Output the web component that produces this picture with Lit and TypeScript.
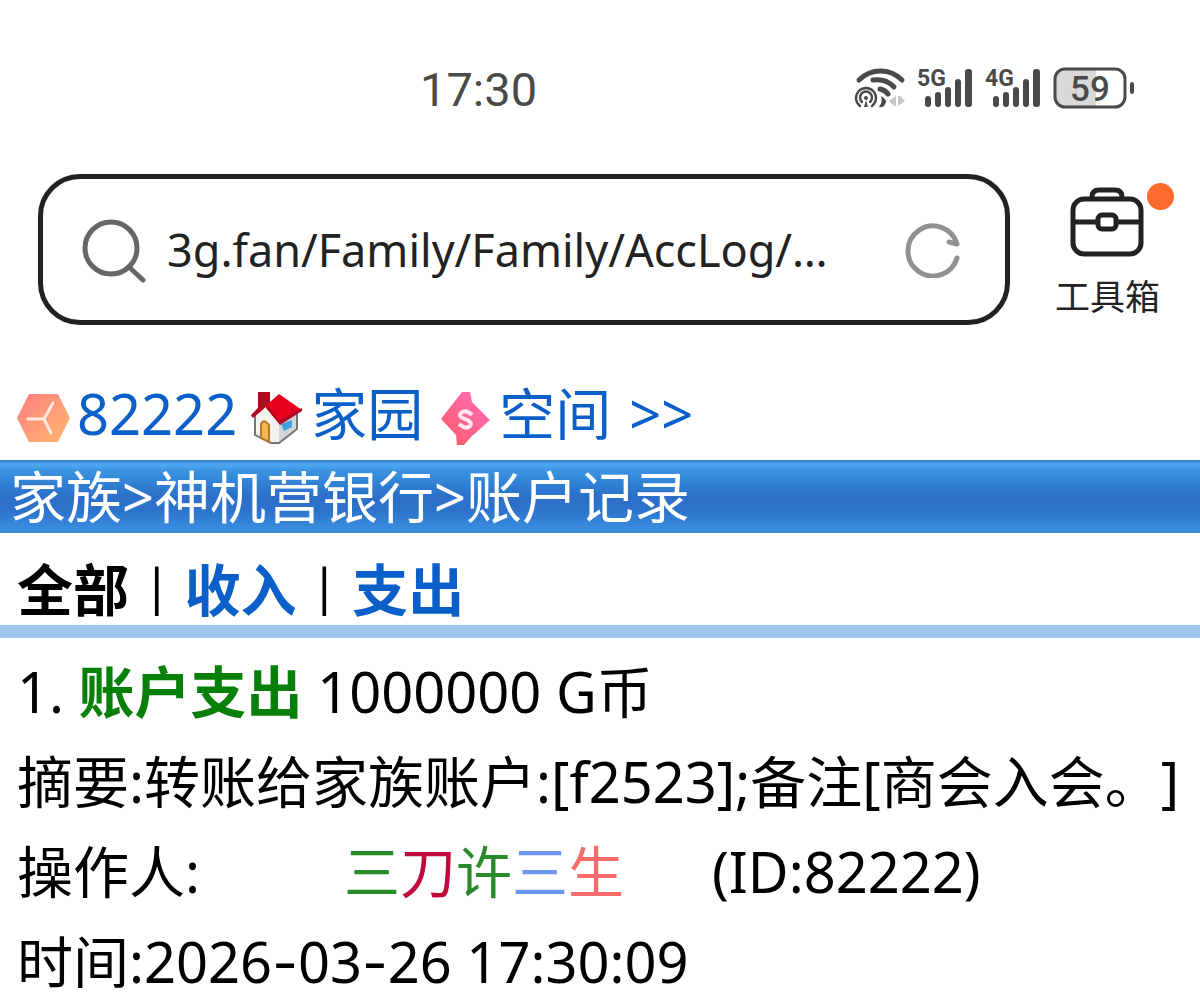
import { LitElement, html, css, svg } from "lit";
import { customElement } from "lit/decorators.js";

const signalBars = svg`
  <g fill="#4a4a4a">
    <rect x="8" y="29" width="6" height="11" rx="3"/>
    <rect x="18" y="25" width="6" height="15" rx="3"/>
    <rect x="28" y="20" width="6" height="20" rx="3"/>
    <rect x="38" y="12" width="6" height="28" rx="3"/>
    <rect x="48" y="2" width="7" height="38" rx="3"/>
  </g>`;

@customElement("status-bar")
class StatusBar extends LitElement {
  static styles = css`
    :host {
      display: flex;
      justify-content: space-between;
      align-items: center;
      padding: 60px 65px 0 35%;
      color: #4a4a4a;
      font-family: Roboto, "Noto Sans", sans-serif;
    }
    .clock {
      font-size: 47px;
      line-height: 60px;
    }
    .tray {
      display: flex;
      align-items: center;
      gap: 12px;
      padding-bottom: 4px;
    }
    svg { display: block; flex: none; overflow: visible; }
    .gen { font: 700 23px Roboto, "Noto Sans", sans-serif; }
    .level { font: 500 35px Roboto, "Noto Sans", sans-serif; }
  `;
  signal(gen: string) {
    return html`<svg width="56" height="42" viewBox="0 0 56 42" role="img" aria-label="${gen} signal">
      ${signalBars}
      <text class="gen" x="0" y="19" fill="#4a4a4a">${gen}</text>
    </svg>`;
  }
  render() {
    return html`
      <time class="clock">17:30</time>
      <div class="tray">
        <svg width="50" height="42" viewBox="0 0 50 42" role="img" aria-label="Wi-Fi">
          <g fill="none" stroke="#4a4a4a" stroke-linecap="round">
            <g stroke-width="5">
              <path d="M4 13C16 1 35 1 47 13"/>
              <path d="M18 13Q31 11 39 20"/>
              <path d="M25 22Q30 23 33 27"/>
            </g>
            <g stroke-width="2.4">
              <path d="M5 39A10 10 0 1 1 17 39"/>
              <path d="M7 35A6 6 0 1 1 15 35"/>
            </g>
          </g>
          <circle cx="11" cy="31" r="2" fill="#4a4a4a"/>
          <path d="M9 40L11 33L13 40Z" fill="#4a4a4a"/>
          <path d="M26 29Q34 33 29 39Q27 41 24 40Q28 35 26 29Z" fill="#4a4a4a"/>
          <path d="M41 29V39H39L34 34ZM43 29H45L50 34L43 39Z" fill="#c8c8c8"/>
        </svg>
        ${this.signal("5G")} ${this.signal("4G")}
        <svg width="82" height="42" viewBox="0 0 82 42" role="img" aria-label="Battery">
          <path d="M12 2H43V40H12Q2 40 2 30V12Q2 2 12 2Z" fill="#d9d9d9"/>
          <rect x="2" y="2" width="70" height="38" rx="10" fill="none" stroke="#4a4a4a" stroke-width="3"/>
          <rect x="77" y="15" width="4" height="12" rx="2" fill="#4a4a4a"/>
          <text class="level" x="37" y="34" text-anchor="middle" fill="#4a4a4a">59</text>
        </svg>
      </div>`;
  }
}

@customElement("address-bar")
class AddressBar extends LitElement {
  static styles = css`
    :host {
      display: flex;
      align-items: stretch;
      height: 151px;
      padding: 0 40px 0 38px;
      gap: 45px;
      color: #222;
      font-family: "Noto Sans", "Noto Sans CJK SC", sans-serif;
    }
    .box {
      box-sizing: border-box;
      display: flex;
      flex: 1;
      min-width: 0;
      align-items: center;
      border: 5px solid #222;
      border-radius: 42px;
      padding: 0 44px 0 38px;
    }
    .url {
      flex: 1;
      min-width: 0;
      margin: 0 20px;
      padding: 0;
      border: 0;
      outline: 0;
      background: none;
      color: inherit;
      font: 45px "Noto Sans", sans-serif;
      line-height: 64px;
    }
    button {
      padding: 0;
      border: 0;
      background: none;
      color: inherit;
      font-family: inherit;
    }
    svg { display: block; flex: none; }
    .tools {
      position: relative;
      display: flex;
      flex-direction: column;
      align-items: center;
      padding-top: 13px;
      font-size: 35px;
      line-height: 48px;
    }
    .caption { padding-top: 16px; }
    .dot {
      position: absolute;
      top: 9px;
      right: -14px;
      width: 27px;
      height: 27px;
      border-radius: 50%;
      background: #ff6a2f;
    }
  `;
  render() {
    return html`
      <form class="box" @submit=${(e: Event) => e.preventDefault()}>
        <svg width="66" height="66" viewBox="0 0 66 66" aria-hidden="true">
          <g fill="none" stroke="#666" stroke-width="5">
            <circle cx="30" cy="31" r="26"/>
            <path d="M48 50L62 63" stroke-linecap="round"/>
          </g>
        </svg>
        <input class="url" type="text" aria-label="Address" .value=${"3g.fan/Family/Family/AccLog/…"} />
        <button type="button" aria-label="Reload">
          <svg width="56" height="56" viewBox="0 0 56 56">
            <g fill="none" stroke="#919191" stroke-width="5" stroke-linecap="round" stroke-linejoin="round">
              <path d="M52 36A25 25 0 1 1 52 22L44 20"/>
            </g>
          </svg>
        </button>
      </form>
      <button class="tools" type="button">
        <svg width="74" height="70" viewBox="0 0 74 70" aria-hidden="true">
          <g fill="none" stroke="#222" stroke-width="5">
            <rect x="3" y="12" width="68" height="55" rx="11"/>
            <path d="M22 12V10Q22 3 29 3H45Q52 3 52 10V12"/>
            <path d="M3 35H28M46 35H71"/>
            <rect x="28" y="28" width="18" height="14" rx="4"/>
          </g>
        </svg>
        <span class="caption">工具箱</span>
        <span class="dot"></span>
      </button>`;
  }
}

@customElement("app-root")
class AppRoot extends LitElement {
  static styles = css`
    :host {
      display: block;
      background: #fff;
      color: #000;
      font: 56px "Noto Sans", "Noto Sans CJK SC", sans-serif;
      line-height: 72px;
      text-spacing-trim: space-all;
    }
    a { color: #0a5fc8; text-decoration: none; }
    address-bar { margin-top: 54px; }
    .links {
      display: flex;
      align-items: center;
      padding: 52px 16px 11px;
    }
    .links a { display: flex; align-items: center; }
    .links svg { display: block; margin-top: 10px; }
    .home, .space { gap: 8px; }
    .home { margin-left: 14px; }
    .space { margin-left: 18px; }
    .id { gap: 6px; }
    .more { margin-left: 18px; }
    .crumbs {
      margin: 0;
      padding: 0 10px;
      font: inherit;
      line-height: 73px;
      color: #fff;
      background: linear-gradient(#2f78c4 0, #4ba6ee 4px, #4ba6ee 6px, #3d94e2 10px, #2f80d4 24px, #2c6fc8 37px, #2c72cb 50px, #3a8ee0 70px, #3f88cc 73px);
    }
    .crumbs a { color: inherit; }
    .tabs {
      display: flex;
      padding: 20px 17px 0;
      gap: 14px;
      font-weight: 700;
      border-bottom: 13px solid #a0c6ec;
    }
    .sep { font-weight: 400; font-size: 50px; line-height: 64px; }
    .record { padding: 17px 17px 0; display: grid; gap: 18px; }
    .row { white-space: pre; }
    .kind { color: #087f08; }
    .dash { font-family: Inter, sans-serif; }
    .name { padding: 0 88px 0 144px; }
    .g { color: #2a8a2a; }
    .r { color: #c00a3c; }
    .b { color: #6b98ef; }
    .p { color: #f76d6d; }
  `;
  render() {
    return html`
      <status-bar></status-bar>
      <address-bar></address-bar>
      <nav class="links">
        <a class="id" href="#id">
          <svg width="55" height="52" viewBox="0 0 55 52" aria-hidden="true">
            <defs><linearGradient id="hex" x1="0" y1="0" x2="1" y2="1">
              <stop offset="0" stop-color="#ff7e82"/><stop offset="1" stop-color="#ffb86c"/>
            </linearGradient></defs>
            <path d="M13 2H42L54 26L42 50H13L1 26Z" fill="url(#hex)"/>
            <path d="M37 11L28 27L35 41M28 27L12 27" fill="none" stroke="#ffe9dc" stroke-width="3" stroke-linecap="round"/>
          </svg>
          <span>82222</span>
        </a>
        <a class="home" href="#home">
          <svg width="52" height="54" viewBox="0 0 52 54" aria-hidden="true">
            <path d="M4 23L15 14L28 28V53L20 52L5 44Z" fill="#f2f2ef"/>
            <path d="M28 30L46 20V38L28 53Z" fill="#d3d6d8"/>
            <path d="M4 25V44L20 52H28L46 38V22" fill="none" stroke="#777" stroke-width="2"/>
            <path d="M10 47V33Q13 27 18 34V51Z" fill="#f4b94e" stroke="#b5782a" stroke-width="2"/>
            <path d="M30 33L41 29V36L33 40Z" fill="#3fa2dc"/>
            <path d="M7 1H19V11L28 3L51 19L29 33L15 16L3 26L0 25L7 17Z" fill="#e8001f"/>
            <path d="M7 1H19V10L10 20L2 27L0 24L7 17ZM28 30L51 17V20L29 34L15 17L17 14Z" fill="#b00822"/>
          </svg>
          <span>家园</span>
        </a>
        <a class="space" href="#space">
          <svg width="50" height="54" viewBox="0 0 50 54" aria-hidden="true">
            <defs><linearGradient id="tag" x1="0" y1="1" x2="1" y2="0">
              <stop offset="0" stop-color="#ff5a5f"/><stop offset="1" stop-color="#ff6fc4"/>
            </linearGradient></defs>
            <path d="M21 1H29L31 11L49 29L30 46L23 54H16L15 44L0 28Z" fill="url(#tag)"/>
            <path d="M31 24Q25 18 20 22Q17 26 24 28Q32 31 29 35Q25 39 18 33" fill="none" stroke="#ffe3ee" stroke-width="4"/>
          </svg>
          <span>空间</span>
        </a>
        <a class="more" href="#more">&gt;&gt;</a>
      </nav>
      <h1 class="crumbs"><a href="#family">家族</a>&gt;<a href="#bank">神机营银行</a>&gt;账户记录</h1>
      <nav class="tabs">
        <span>全部</span><span class="sep">|</span><a href="#in">收入</a><span class="sep">|</span><a href="#out">支出</a>
      </nav>
      <main class="record">
        <div class="row">1. <b class="kind">账户支出</b> 1000000 G币</div>
        <div class="row">摘要:转账给家族账户:[f2523];备注[商会入会。]</div>
        <div class="row">操作人:<span class="name"><span class="g">三</span><span class="r">刀</span><span class="g">许</span><span class="b">三</span><span class="p">生</span></span>(ID:82222)</div>
        <div class="row">时间:2026<span class="dash">-</span>03<span class="dash">-</span>26 17:30:09</div>
      </main>`;
  }
}
